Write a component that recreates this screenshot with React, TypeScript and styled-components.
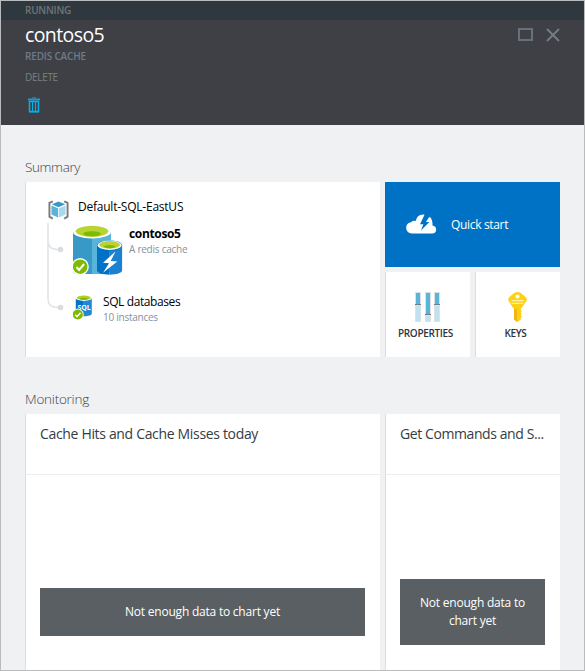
import React from 'react';
import styled, { createGlobalStyle } from 'styled-components';

const GlobalStyle = createGlobalStyle`
  *, *::before, *::after { box-sizing: border-box; }
  body { margin: 0; font-family: "Open Sans", "Noto Sans", sans-serif; }
  svg { display: block; flex: none; }
`;

const Blade = styled.div`
  width: 585px;
  height: 671px;
  border: 1px solid #b9bbbc;
  background: #eff1f3;
  overflow: hidden;
`;

const StatusBar = styled.div`
  height: 19px;
  padding-left: 24px;
  background: #30383f;
  color: #6f7477;
  font-size: 10px;
  font-weight: 600;
  line-height: 19px;
  letter-spacing: -0.23px;
`;

const Header = styled.header`
  display: flex;
  justify-content: space-between;
  height: 105px;
  padding: 4px 24px 0 24px;
  background: #3f4045;
`;

const Title = styled.h1`
  margin: 0;
  color: #fff;
  font-size: 19.5px;
  font-weight: 400;
  line-height: 22px;
  letter-spacing: -0.6px;
`;

const Kind = styled.div`
  color: #6e7a8a;
  font-size: 10px;
  font-weight: 600;
  line-height: 12px;
  margin-top: 4px;
  letter-spacing: -0.17px;
`;

const Command = styled.button`
  display: block;
  margin: 9px 0 0;
  padding: 0;
  border: 0;
  background: none;
  color: #7b8083;
  font: 500 10px/12px "Open Sans", sans-serif;
  letter-spacing: -0.3px;
  text-align: left;

  svg { margin: 14px 0 0 3px; }
`;

const WindowButtons = styled.div`
  display: flex;
  gap: 13px;
  padding-top: 4px;
`;

const Content = styled.main`
  padding: 32px 24px 0;
`;

const SectionTitle = styled.h2<{ $tracking: number }>`
  margin: 0;
  height: 25px;
  color: #3f4449;
  font-size: 13.5px;
  font-weight: 300;
  line-height: 20px;
  letter-spacing: ${(p) => p.$tracking}px;
`;

const Columns = styled.div`
  display: grid;
  grid-template-columns: 355px 175px;
  gap: 5px;
`;

const SummaryRow = styled(Columns)`
  height: 175px;
  margin-bottom: 32px;
`;

const Card = styled.section`
  border-left: 1px solid #dcdfe2;
  background: #fff;
`;

const ResourceCard = styled(Card)`
  padding: 17px 0 0 21px;
`;

const GroupRow = styled.div`
  display: flex;
  gap: 9px;
  height: 24px;
  padding-left: 1px;
`;

const GroupName = styled.div`
  color: #000;
  font-size: 12px;
  line-height: 16px;
  letter-spacing: -0.23px;
`;

const Tree = styled.div`
  display: flex;
`;

const Resources = styled.div`
  display: flex;
  flex-direction: column;
  gap: 19px;
  padding-left: 9px;
`;

const Resource = styled.div<{ $gap: number }>`
  display: flex;
  gap: ${(p) => p.$gap}px;
`;

const ResourceName = styled.div<{ $bold?: boolean }>`
  color: #000;
  font-size: 12px;
  font-weight: ${(p) => (p.$bold ? 700 : 400)};
  line-height: 16px;
  letter-spacing: ${(p) => (p.$bold ? -0.35 : -0.4)}px;
  padding-top: ${(p) => (p.$bold ? 3 : 0)}px;
`;

const ResourceInfo = styled.div`
  color: #8592a1;
  font-size: 10px;
  line-height: 14px;
  letter-spacing: -0.25px;
`;

const Tiles = styled.div`
  display: grid;
  grid-template-columns: 85px 85px;
  grid-template-rows: 85px 85px;
  gap: 5px;
`;

const QuickStart = styled.div`
  display: flex;
  grid-column: 1 / -1;
  align-items: center;
  gap: 14px;
  padding-left: 21px;
  background: #0072c6;
  color: #fff;
  font-size: 12px;
  letter-spacing: -0.33px;

  svg { margin-top: -2px; }
`;

const Tile = styled(Card)`
  display: flex;
  flex-direction: column;
  align-items: center;
  padding: 20px 5px 0 0;
  color: #2b343c;
  font-size: 10px;
  font-weight: 600;
  line-height: 14px;
  letter-spacing: -0.32px;

  svg { margin: 0 0 4px 3px; }
`;

const ChartCard = styled(Card)`
  height: 335px;
`;

const ChartTitle = styled.h3<{ $tracking: number }>`
  margin: 0;
  height: 61px;
  padding: 10px 14px 0;
  border-bottom: 1px solid #eceef0;
  color: #343c44;
  font-size: 14px;
  font-weight: 400;
  line-height: 20px;
  letter-spacing: ${(p) => p.$tracking}px;
  white-space: nowrap;
`;

const ChartBody = styled.div`
  display: flex;
  align-items: center;
  height: 274px;
  padding: 0 15px 0 14px;
`;

const Notice = styled.div`
  flex: 1;
  padding: 15px 18px;
  background: #5a5f63;
  color: #fff;
  font-size: 12px;
  line-height: 18px;
  letter-spacing: -0.22px;
  text-align: center;
`;

const TrashIcon = () => (
  <svg width="12" height="16" viewBox="0 0 12 16" fill="none" stroke="#00b0ea">
    <path d="M4.500 1.500V.5h3v1" stroke="#1585ac" />
    <path d="M0 2.500h12" stroke="#1a9cca" strokeWidth="2" />
    <path d="M1.500 4v10.500h9V4" strokeWidth="1.500" />
    <path d="M1 4.500h10M1 14.700h10" strokeWidth="1.400" />
    <path d="M4.500 5v9M7.500 5v9" strokeWidth="1.100" />
  </svg>
);

const MaximizeIcon = () => (
  <svg width="15" height="13" viewBox="0 0 15 13">
    <rect x="1" y="1" width="13" height="11" fill="none" stroke="#66717b" strokeWidth="2" />
  </svg>
);

const CloseIcon = () => (
  <svg width="14" height="14" viewBox="0 0 14 14">
    <path d="M1 1l12 12M13 1L1 13" stroke="#717c84" strokeWidth="2" />
  </svg>
);

const GroupIcon = () => (
  <svg width="21" height="21" viewBox="0 -1 22 21">
    <path d="M5 1L1.500 2.600V17L5 19M17 1l3.500 1.600V17L17 19" fill="none" stroke="#7a7a7a" strokeWidth="2" />
    <path d="M11 1l7 3-7 3.200L4 4z" fill="#3999c6" />
    <path d="M3.600 5.400L10.600 8.300v9.600l-7-3.200z" fill="#59b4d9" />
    <path d="M18.400 5.400L11.400 8.300v9.600l7-3.200z" fill="#a9d9ee" />
  </svg>
);

const Connector = () => (
  <svg width="17" height="88" viewBox="0 0 17 88" fill="none" stroke="#e1e4e7" strokeWidth="1.500">
    <path d="M1 0v76q0 8 9 8.500h4M1 18q0 8 9 8.500h4" />
    <circle cx="13.500" cy="26.500" r="2.800" fill="#d9dde0" stroke="none" />
    <circle cx="13.500" cy="84.500" r="2.800" fill="#d9dde0" stroke="none" />
  </svg>
);

const CacheIcon = () => (
  <svg width="50" height="52" viewBox="0 -2.500 50 52">
    <path d="M0 6.500V45c0 2 1.500 3.500 4 3.500h15v-42z" fill="#3999c6" />
    <path d="M19 6.500v42h10c5 0 9-2 9-4v-38z" fill="#59b4d9" />
    <ellipse cx="19" cy="6.500" rx="19" ry="6.500" fill="#fff" />
    <ellipse cx="19" cy="5.800" rx="16.300" ry="5.500" fill="#b8d432" />
    <path d="M10 8.600c0-1.700 4-2.900 9-2.900s9 1.200 9 2.900c-2 1.800-5 2.500-9 2.500s-7-.7-9-2.500z" fill="#7fba00" />
    <path d="M24 20V45c0 2.300 5.600 4.200 12.500 4.200V20z" fill="#0072c6" />
    <path d="M36.500 20v29.200c7 0 12.600-1.900 12.600-4.200V20z" fill="#1c82d0" />
    <ellipse cx="36.600" cy="20" rx="12.600" ry="5.200" fill="#0072c6" />
    <ellipse cx="36.600" cy="19.800" rx="12" ry="4.700" fill="#fff" />
    <ellipse cx="36.600" cy="19.300" rx="10.500" ry="3.700" fill="#b8d432" />
    <path d="M31 21.300c0-1 2.600-1.800 5.700-1.800s5.700.8 5.700 1.800c-1.300 1.100-3.300 1.600-5.700 1.600s-4.400-.5-5.700-1.600z" fill="#7fba00" />
    <path d="M42.500 26L30 37.300l6 .4-6 9.500L44.300 36l-6.600-.4z" fill="#fff" />
    <circle cx="7.200" cy="41.200" r="8.600" fill="#fff" />
    <circle cx="7.200" cy="41.200" r="7.300" fill="#7fba00" />
    <path d="M3.400 41.500l2.700 3 5-6" fill="none" stroke="#fff" strokeWidth="2" />
  </svg>
);

const SqlIcon = () => (
  <svg width="22" height="26" viewBox="1.200 -1.200 22 26">
    <path d="M4 3v15.500C4 20 7.600 21 12 21V3z" fill="#0072c6" />
    <path d="M12 3v18c4.500 0 8-1 8-2.500V3z" fill="#2386d2" />
    <ellipse cx="12" cy="3" rx="8" ry="2.700" fill="#fff" />
    <ellipse cx="12" cy="2.600" rx="7" ry="2.200" fill="#b0cf23" />
    <ellipse cx="12" cy="3.600" rx="3.800" ry="1.100" fill="#7fba00" />
    <text x="12.300" y="15" textAnchor="middle" fill="#fff" fontFamily="Open Sans" fontWeight="700" fontSize="7" textLength="13">SQL</text>
    <circle cx="6" cy="19.300" r="5.900" fill="#fff" />
    <circle cx="6" cy="19.300" r="5.100" fill="#7fba00" />
    <path d="M3.400 19.500l1.900 2 3.400-4" fill="none" stroke="#fff" strokeWidth="1.400" />
  </svg>
);

const CloudIcon = () => (
  <svg width="31" height="20" viewBox="0 0 31 20">
    <path d="M6 19.500C2.500 19.500.2 17 .2 13.800c0-3 2-5.500 5-5.600C6 7 8.500 6.500 10 7c.2-4 4-7 8.500-6.300L14 10.200h3.400L15 16.500 23.400 8h-3.500l3-4.600 1.100-.5C26 5 26.800 8.500 26.500 11.500c2.200.3 3.700 2 3.700 4 0 2.400-1.600 4-3.800 4z" fill="#fff" />
  </svg>
);

const PropertiesIcon = () => (
  <svg width="25" height="30" viewBox="0 0 25 30">
    {[
      [0, 12],
      [10, 22],
      [19, 12],
    ].map(([x, knob]) => (
      <g key={x}>
        <rect x={x} width="6" height="30" fill="#dfe2e4" />
        <rect x={x + 1} y="1" width="4" height={knob} fill="#59b4d9" />
        <rect x={x + 1} y={knob + 2} width="4" height={27 - knob} fill="#bfe2f3" />
        <rect x={x} y={knob} width="6" height="1" fill="#777c80" />
      </g>
    ))}
  </svg>
);

const KeyIcon = () => (
  <svg width="19" height="30" viewBox="0.500 0 19 30">
    <path d="M7 .8Q10-.8 13 .8l5.300 4.400q1.700 1.700.6 3.800L15 14.800q-1 1.400-1.700 2V18l1 1-1 1.500 1 1.200-1 1.600 1 1.300-1 1.500v1.300L10 30l-3.500-2.600V16.800q-1-.7-1.600-1.700L1.200 9q-1-2 .4-3.800z" fill="#fcd116" />
    <path d="M6.500 17h3v13l-3-2.600z" fill="#f5b315" />
    <path d="M4 8.700h12M4 11.300h12" stroke="#fff1a8" strokeWidth="1.300" />
    <circle cx="10" cy="4.600" r="2" fill="#fff" />
  </svg>
);

export default function App() {
  return (
    <>
      <GlobalStyle />
      <Blade>
        <StatusBar>RUNNING</StatusBar>
        <Header>
          <div>
            <Title>contoso5</Title>
            <Kind>REDIS CACHE</Kind>
            <Command>
              DELETE
              <TrashIcon />
            </Command>
          </div>
          <WindowButtons>
            <MaximizeIcon />
            <CloseIcon />
          </WindowButtons>
        </Header>
        <Content>
          <SectionTitle $tracking={-0.38}>Summary</SectionTitle>
          <SummaryRow>
            <ResourceCard>
              <GroupRow>
                <GroupIcon />
                <GroupName>Default-SQL-EastUS</GroupName>
              </GroupRow>
              <Tree>
                <Connector />
                <Resources>
                  <Resource $gap={6}>
                    <CacheIcon />
                    <div>
                      <ResourceName $bold>contoso5</ResourceName>
                      <ResourceInfo>A redis cache</ResourceInfo>
                    </div>
                  </Resource>
                  <Resource $gap={8}>
                    <SqlIcon />
                    <div>
                      <ResourceName>SQL databases</ResourceName>
                      <ResourceInfo>10 instances</ResourceInfo>
                    </div>
                  </Resource>
                </Resources>
              </Tree>
            </ResourceCard>
            <Tiles>
              <QuickStart>
                <CloudIcon />
                Quick start
              </QuickStart>
              <Tile>
                <PropertiesIcon />
                PROPERTIES
              </Tile>
              <Tile>
                <KeyIcon />
                KEYS
              </Tile>
            </Tiles>
          </SummaryRow>
          <SectionTitle $tracking={-0.24}>Monitoring</SectionTitle>
          <Columns>
            <ChartCard>
              <ChartTitle $tracking={-0.33}>Cache Hits and Cache Misses today</ChartTitle>
              <ChartBody>
                <Notice>Not enough data to chart yet</Notice>
              </ChartBody>
            </ChartCard>
            <ChartCard>
              <ChartTitle $tracking={-0.41}>Get Commands and S...</ChartTitle>
              <ChartBody>
                <Notice>Not enough data to chart yet</Notice>
              </ChartBody>
            </ChartCard>
          </Columns>
        </Content>
      </Blade>
    </>
  );
}
